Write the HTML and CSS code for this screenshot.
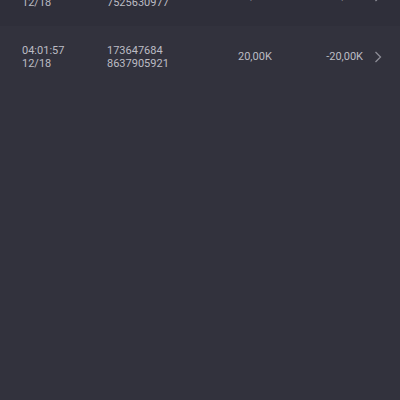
FILE: index.html
```html
<!DOCTYPE html>
<html lang="en">
<head>
    <meta charset="UTF-8">
    <meta name="viewport" content="width=device-width, initial-scale=1.0">
    <title>Trades</title>
    <link rel="stylesheet" href="styles.css">
</head>
<body>
    <div class="list">
        <div class="row first">
            <div class="col time"><span>04:02:11</span><span>12/18</span></div>
            <div class="col id"><span>173647690</span><span>7525630977</span></div>
            <div class="col amount">20,00K</div>
            <div class="col result">-20,00K</div>
            <div class="col arrow">
                <svg width="8" height="12" viewBox="0 0 8 12"><path d="M1.5 1 L6.5 6 L1.5 11" fill="none" stroke="#8d8d97" stroke-width="1.3"/></svg>
            </div>
        </div>
        <div class="row">
            <div class="col time"><span>04:01:57</span><span>12/18</span></div>
            <div class="col id"><span>173647684</span><span>8637905921</span></div>
            <div class="col amount">20,00K</div>
            <div class="col result">-20,00K</div>
            <div class="col arrow">
                <svg width="8" height="12" viewBox="0 0 8 12"><path d="M1.5 1 L6.5 6 L1.5 11" fill="none" stroke="#8d8d97" stroke-width="1.3"/></svg>
            </div>
        </div>
    </div>
</body>
</html>
```

FILE: styles.css
```css
html, body {
    margin: 0;
    height: 100%;
    background-color: #32323d;
}

body {
    font-family: Roboto, "Liberation Sans", sans-serif;
    font-size: 11px;
    line-height: 13px;
    color: #bcbcc4;
    overflow: hidden;
}

.list {
    margin-top: -35px;
}

.row {
    display: flex;
    align-items: center;
    height: 61px;
    padding-left: 22px;
    box-sizing: border-box;
}

.row.first {
    background-color: #2f2f3a;
}

.col {
    display: flex;
    flex-direction: column;
}

.time {
    width: 85px;
}

.id {
    width: 131px;
}

.amount {
    width: 50px;
}

.result {
    width: 75px;
    align-items: flex-end;
}

.arrow {
    margin-left: 11px;
}
```
